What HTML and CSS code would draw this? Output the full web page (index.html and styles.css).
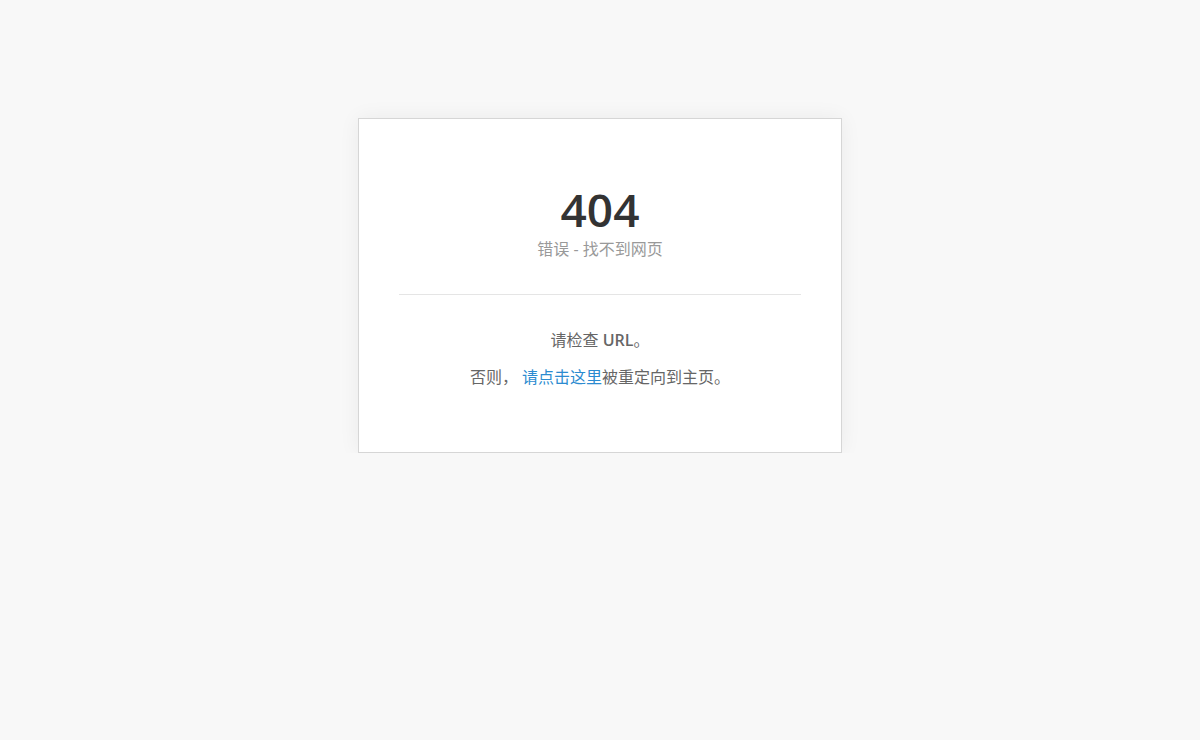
FILE: index.html
```html
<!DOCTYPE html>
<html lang="zh-CN">
<head>
<meta charset="utf-8">
<title>404</title>
<link rel="stylesheet" href="styles.css">
</head>
<body>
<main class="page">
  <section class="card">
    <div class="head">
      <h1 class="code">404</h1>
      <p class="sub">错误 - 找不到网页</p>
    </div>
    <hr class="divider">
    <div class="body">
      <p class="line">请检查 <span class="url">URL</span>。</p>
      <p class="line">否则， <a class="link" href="#">请点击这里</a>被重定向到主页。</p>
    </div>
  </section>
</main>
</body>
</html>
```
FILE: styles.css
```css
html, body {
  margin: 0;
  padding: 0;
  background: #f8f8f8;
  font-family: "Open Sans", "Noto Sans CJK SC", sans-serif;
}
.page {
  display: flex;
  justify-content: center;
  padding-top: 118px;
}
.card {
  width: 402px;
  padding: 0 40px;
  background: #fff;
  border: 1px solid #d6d6d6;
  box-shadow: 0 0 20px rgba(0,0,0,0.06);
  box-sizing: content-box;
}
.head {
  padding-top: 62px;
  text-align: center;
}
.code {
  margin: 0;
  font-family: "Open Sans", sans-serif;
  font-size: 46px;
  font-weight: 600;
  line-height: 56px;
  color: #333;
}
.sub {
  margin: 0;
  font-size: 16px;
  line-height: 24px;
  color: #999;
}
.divider {
  margin: 33px 0 0;
  border: 0;
  border-top: 1px solid #e5e5e5;
}
.body {
  padding: 34px 0 64px;
  text-align: center;
}
.line {
  margin: 0;
  font-size: 16px;
  line-height: 22px;
  color: #666;
}
.line + .line {
  margin-top: 15px;
}
.url {
  font-weight: 600;
}
.link {
  color: #2c8bd0;
  text-decoration: none;
}
```
